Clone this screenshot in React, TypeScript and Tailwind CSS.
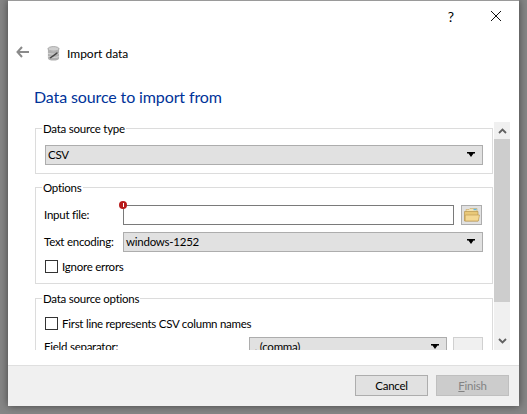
const font = "font-['Lato','Noto_Sans',sans-serif]";
const body = "text-[11.5px] tracking-[-0.25px] text-black";

function Caret() {
  return (
    <svg width="9" height="6" viewBox="0 0 9 6" className="shrink-0">
      <path d="M0 0H8V1.5H6.5L4 5 1.5 1.5H0Z" fill="#000" />
    </svg>
  );
}

function Combo({ value, className }: { value: string; className: string }) {
  return (
    <div className={`flex h-5 items-center justify-between border border-[#adadad] bg-[#e1e1e1] pl-[2px] pr-[6px] ${body} ${className}`}>
      <span className="whitespace-pre">{value}</span>
      <Caret />
    </div>
  );
}

function Check({ label }: { label: string }) {
  return (
    <div className={`flex items-center gap-[4px] leading-[13px] ${body}`}>
      <div className="h-[13px] w-[13px] border border-[#333] bg-white" />
      <span>{label}</span>
    </div>
  );
}

function Group({ title, className, children }: { title: string; className?: string; children: React.ReactNode }) {
  return (
    <div className={`relative w-[458px] border border-[#dcdcdc] ${className ?? ""}`}>
      <span className={`absolute left-[6px] top-[-7px] whitespace-nowrap bg-white px-[1px] leading-[14px] ${body}`}>{title}</span>
      {children}
    </div>
  );
}

function DbIcon() {
  return (
    <svg width="13" height="15" viewBox="0 0 14 16">
      <ellipse cx="7" cy="3" rx="6" ry="2.5" fill="#cfcfcf" stroke="#8c8c8c" strokeWidth="0.7" />
      <path d="M1 3V13C1 14.4 3.7 15.5 7 15.5S13 14.4 13 13V3C13 4.4 10.3 5.5 7 5.5S1 4.4 1 3Z" fill="#b0b0b0" />
      <path d="M1 7.5C2 9 12 9 13 7.5M1 11C2 12.5 12 12.5 13 11" stroke="#e8e8e8" strokeWidth="0.8" fill="none" />
      <path d="M2.5 12.5 11 6.5 11.5 8 4 13.5Z" fill="#444" />
    </svg>
  );
}

function FolderIcon() {
  return (
    <svg width="16" height="14" viewBox="0 0 16 14">
      <path d="M2 1.5H5L6 0.5H13V5H2Z" fill="#f3e3b4" stroke="#c9a860" strokeWidth="0.6" />
      <rect x="9.5" y="0.8" width="3" height="1.4" fill="#5cb8e6" />
      <path d="M0.5 3.5H14V13H0.5Z" fill="#e9c878" stroke="#b8954e" strokeWidth="0.7" />
      <path d="M1.2 7H15.5L14.3 13H1.2Z" fill="#f4d893" stroke="#b8954e" strokeWidth="0.6" />
    </svg>
  );
}

export default function App() {
  return (
    <div className={`h-[414px] w-[527px] overflow-hidden bg-[#868686] ${font}`}>
      <div className="ml-[8px] flex h-[406px] w-[511px] flex-col border-t border-[#9a9a9a] bg-white shadow-[0_0_8px_rgba(0,0,0,0.5)]">
        <div className="flex h-[30px] items-center justify-end">
          <span className="mr-[36px] text-[14px] text-black">?</span>
          <svg width="12" height="12" viewBox="0 0 12 12" className="mr-[17px]">
            <path d="M1 1 11 11M11 1 1 11" stroke="#111" strokeWidth="1" />
          </svg>
        </div>
        <div className="mt-[14px] flex h-[17px] items-center pl-[8px]">
          <svg width="13" height="12" viewBox="0 0 13 12" className="mb-[3px]">
            <path d="M6 1 1.5 6 6 11M1.5 6H13" stroke="#8a8a8a" strokeWidth="2" fill="none" />
          </svg>
          <div className="ml-[18px] flex"><DbIcon /></div>
          <span className="ml-[7px] text-[12px] text-black">Import data</span>
        </div>
        <div className="ml-[26px] mt-[23px] text-[16px] leading-[24px] tracking-[-0.12px] text-[#003399]">Data source to import from</div>
        <div className="mt-[13px] flex h-[228px] pl-[27px]">
          <div className="h-full w-[458px] overflow-hidden pt-[6px]">
            <Group title="Data source type" className="h-[46px] pl-[9px] pt-[16px]">
              <Combo value="CSV" className="w-[438px]" />
            </Group>
            <Group title="Options" className="mt-[13px] h-[97px] pl-[8px] pt-[17px]">
              <div className="flex items-center">
                <span className={`w-[79px] whitespace-nowrap ${body}`}>Input file:</span>
                <div className="relative h-5 w-[331px] border border-[#7a7a7a] bg-white">
                  <span className="absolute left-[-5px] top-[-5px] flex h-[8px] w-[8px] items-center justify-center rounded-full bg-[#b81c1c]">
                    <span className="h-[4px] w-[1px] bg-white" />
                  </span>
                </div>
                <div className="ml-[7px] flex h-5 w-[21px] items-center justify-center border border-[#adadad] bg-[#e1e1e1]">
                  <FolderIcon />
                </div>
              </div>
              <div className="mt-[7px] flex items-center">
                <span className={`w-[79px] whitespace-nowrap ${body}`}>Text encoding:</span>
                <Combo value="windows-1252" className="w-[360px]" />
              </div>
              <div className="ml-[1px] mt-[8px]"><Check label="Ignore errors" /></div>
            </Group>
            <Group title="Data source options" className="mt-[14px] h-[80px] pl-[9px] pt-[18px]">
              <Check label="First line represents CSV column names" />
              <div className="mt-[7px] flex items-center">
                <span className={`ml-[-1px] w-[205px] whitespace-nowrap ${body}`}>Field separator:</span>
                <Combo value=" , (comma)" className="w-[198px]" />
                <div className="ml-[6px] h-5 w-[30px] border border-[#d0d0d0] bg-[#f0f0f0]" />
              </div>
            </Group>
          </div>
          <div className="ml-[1px] flex h-full w-[16px] flex-col bg-[#f0f0f0]">
            <div className="flex h-[17px] items-center justify-center">
              <svg width="9" height="6" viewBox="0 0 9 6"><path d="M1 5 4.5 1.5 8 5" stroke="#606060" strokeWidth="1.8" fill="none" /></svg>
            </div>
            <div className="h-[163px] bg-[#cdcdcd]" />
            <div className="flex flex-1 items-end justify-center pb-[6px]">
              <svg width="9" height="6" viewBox="0 0 9 6"><path d="M1 1 4.5 4.5 8 1" stroke="#606060" strokeWidth="1.8" fill="none" /></svg>
            </div>
          </div>
        </div>
        <div className="mt-[15px] flex flex-1 items-start justify-end gap-[8px] border-t border-[#dfdfdf] bg-[#f0f0f0] pr-[10px] pt-[9px]">
          <div className={`flex h-[21px] w-[73px] items-center justify-center border border-[#adadad] bg-[#e1e1e1] ${body}`}>Cancel</div>
          <div className="flex h-[21px] w-[73px] items-center justify-center border border-[#bfbfbf] bg-[#cccccc] text-[11.5px] tracking-[-0.25px] text-[#838383]">
            <span><span className="underline">F</span>inish</span>
          </div>
        </div>
      </div>
    </div>
  );
}
